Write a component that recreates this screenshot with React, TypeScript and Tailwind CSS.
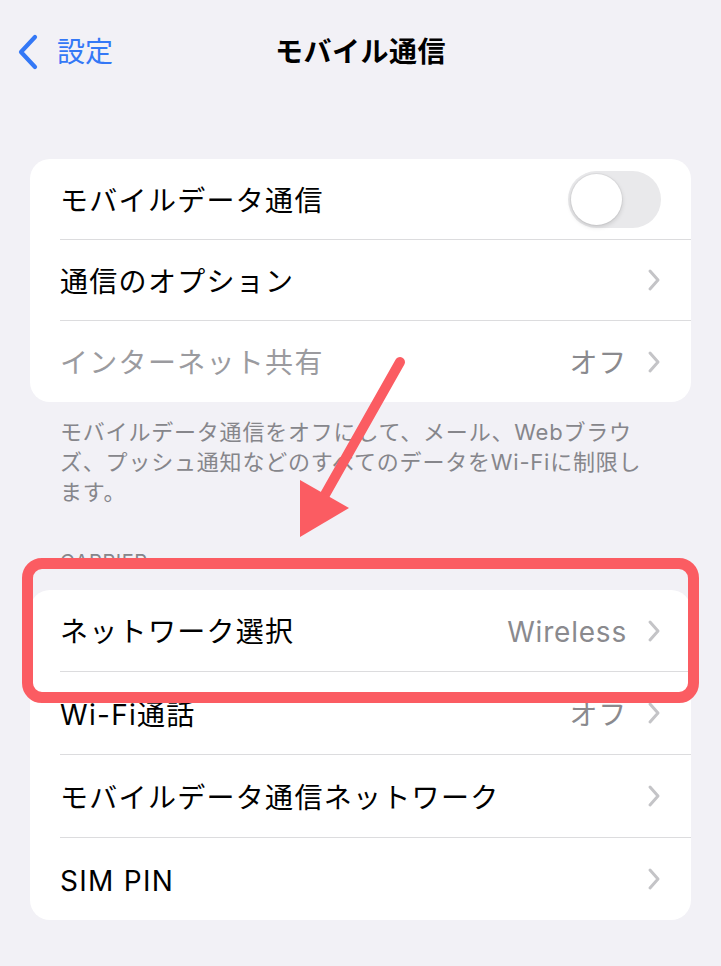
import { ReactNode } from 'react';

const font = { fontFamily: 'Inter, "Noto Sans CJK JP", sans-serif' };

function Chevron() {
  return (
    <svg width="14" height="24" viewBox="0 0 14 24" className="shrink-0">
      <path d="M3 3 L11 12 L3 21" fill="none" stroke="#c4c4c7" strokeWidth="3" strokeLinecap="round" strokeLinejoin="round" />
    </svg>
  );
}

function Toggle() {
  return (
    <div className="w-[93px] h-[57px] rounded-full bg-[#e9e9eb] p-[3px] flex items-center">
      <div className="w-[51px] h-[51px] rounded-full bg-white shadow-[0_2px_5px_rgba(0,0,0,0.15),0_0_0_1px_rgba(0,0,0,0.04)]" />
    </div>
  );
}

interface RowProps {
  label: string;
  value?: string;
  right?: ReactNode;
  muted?: boolean;
  last?: boolean;
  chevron?: boolean;
  h?: string;
}

function Row({ label, value, right, muted, last, chevron = true, h = 'h-[81px]' }: RowProps) {
  return (
    <div className={`flex pl-[30px] ${h}`}>
      <div className={`flex-1 flex items-center pr-[30px] ${last ? '' : 'border-b border-[#dcdcde]'}`}>
        <span className={`flex-1 pt-[3px] text-[28px] tracking-[1.3px] ${muted ? 'text-[#9b9b9f]' : 'text-black'}`}>{label}</span>
        {value && <span className="pt-[3px] text-[28px] tracking-[0.8px] text-[#8a8a8e] mr-[20px]">{value}</span>}
        {right}
        {chevron && !right && <Chevron />}
      </div>
    </div>
  );
}

export default function App() {
  return (
    <div className="relative w-[721px] h-[966px] bg-[#f2f1f6] overflow-hidden" style={font}>
      {/* Nav bar */}
      <div className="relative h-[104px] flex items-center">
        <div className="flex items-center pl-[17px] gap-[18px]">
          <svg width="22" height="36" viewBox="0 0 22 36">
            <path d="M18 3 L4 18 L18 33" fill="none" stroke="#3478f6" strokeWidth="4.2" strokeLinecap="round" strokeLinejoin="round" />
          </svg>
          <span className="text-[28px] text-[#3478f6]">設定</span>
        </div>
        <span className="absolute left-0 right-0 text-center text-[28px] font-bold text-black tracking-[0.5px]">モバイル通信</span>
      </div>

      {/* Section 1 */}
      <div className="mt-[55px] mx-[30px] bg-white rounded-[20px] overflow-hidden">
        <Row label="モバイルデータ通信" right={<Toggle />} />
        <Row label="通信のオプション" />
        <Row label="インターネット共有" value="オフ" muted last />
      </div>
      <p className="mt-[15px] px-[60px] text-[22px] leading-[30px] text-[#86868b] whitespace-nowrap tracking-[0.8px]">
        モバイルデータ通信をオフにして、メール、Webブラウ<br />
        ズ、プッシュ通知などのすべてのデータをWi-Fiに制限し<br />
        ます。
      </p>

      {/* Carrier */}
      <div className="mt-[43px] px-[60px] text-[20px] leading-[24px] text-[#86868b] tracking-[0.5px]">CARRIER</div>
      <div className="mt-[16px] mx-[30px] bg-white rounded-[20px] overflow-hidden">
        <Row label="ネットワーク選択" value="Wireless" h="h-[82px]" />
        <Row label="Wi-Fi通話" value="オフ" h="h-[83px]" />
        <Row label="モバイルデータ通信ネットワーク" h="h-[83px]" />
        <Row label="SIM PIN" last h="h-[82px]" />
      </div>

      {/* Annotation */}
      <div className="absolute left-[22px] top-[558px] w-[677px] h-[145px] border-[11px] border-[#fb5c62] rounded-[20px] pointer-events-none" />
      <svg className="absolute left-0 top-0 pointer-events-none" width="721" height="966">
        <line x1="400" y1="362" x2="322" y2="500" stroke="#fb5c62" strokeWidth="10" strokeLinecap="round" />
        <polygon points="300,537 349,508 300,480" fill="#fb5c62" />
      </svg>
    </div>
  );
}
